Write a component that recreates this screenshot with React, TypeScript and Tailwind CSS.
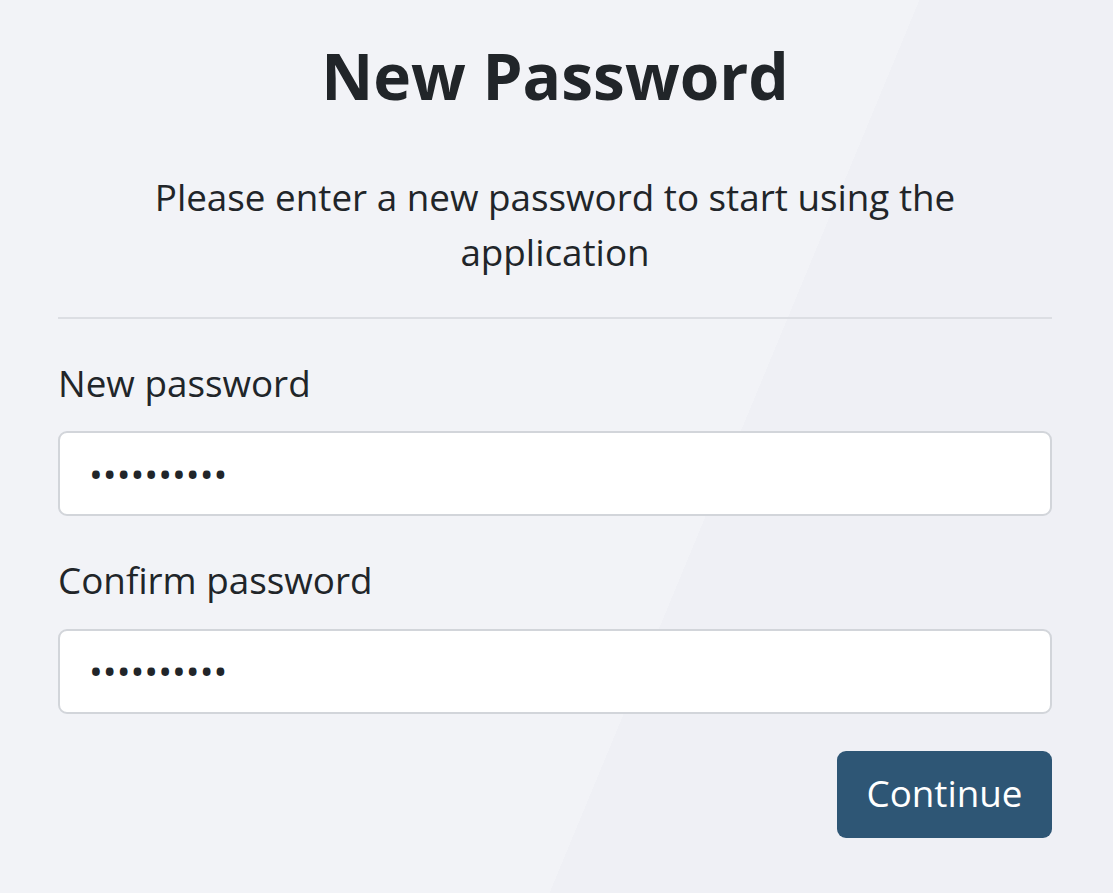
import React from "react";

export default function App() {
  return (
    <div
      className="min-h-[893px] w-full bg-[linear-gradient(112.5deg,#f2f3f7_62%,#eff0f5_62%)] text-[#212529]"
      style={{ fontFamily: '"Open Sans", "Noto Sans", sans-serif' }}
    >
      <div className="pl-[58px] pr-[61px] pt-[38px]">
        <h1 className="text-center text-[64px] font-bold leading-[1.2]">New Password</h1>
        <p className="mt-[55px] px-[80px] text-center text-[36.8px] leading-[1.5]">
          Please enter a new password to start using the application
        </p>
        <div className="mt-[37px] h-[2px] bg-[#dcdee3]" />
        <form className="mt-[37px] flex flex-col" onSubmit={(e) => e.preventDefault()}>
          <label className="text-[36.8px] leading-[1.5]">New password</label>
          <input
            type="password"
            defaultValue="password12"
            className="mt-[20px] h-[85px] w-full rounded-[9px] border-2 border-[#d2d5da] bg-white px-[29px] text-[36.8px] outline-none"
          />
          <label className="mt-[37px] text-[36.8px] leading-[1.5]">Confirm password</label>
          <input
            type="password"
            defaultValue="password12"
            className="mt-[20px] h-[85px] w-full rounded-[9px] border-2 border-[#d2d5da] bg-white px-[29px] text-[36.8px] outline-none"
          />
          <div className="mt-[37px] flex justify-end">
            <button
              type="submit"
              className="h-[87px] w-[215px] rounded-[9px] bg-[#2e5675] text-[36.8px] text-white"
            >
              Continue
            </button>
          </div>
        </form>
      </div>
    </div>
  );
}
